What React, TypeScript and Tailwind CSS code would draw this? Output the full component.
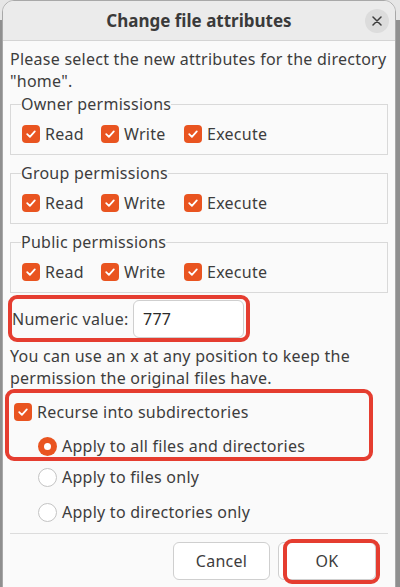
const font = "[font-family:'Noto_Sans',sans-serif]";

function Check({ size = 18 }: { size?: number }) {
  return (
    <span
      className="flex shrink-0 items-center justify-center rounded-[4px] bg-[#e95420]"
      style={{ width: size, height: size }}
    >
      <svg width="12" height="12" viewBox="0 0 12 12" fill="none">
        <path d="M2.2 6.2 L4.9 8.8 L9.8 3.4" stroke="white" strokeWidth="1.8" strokeLinecap="round" strokeLinejoin="round" />
      </svg>
    </span>
  );
}

function Radio({ on }: { on?: boolean }) {
  return on ? (
    <span className="flex h-[19px] w-[19px] shrink-0 items-center justify-center rounded-full bg-[#e95420]">
      <span className="h-[7px] w-[7px] rounded-full bg-white" />
    </span>
  ) : (
    <span className="h-[19px] w-[19px] shrink-0 rounded-full border border-[#c4c4c4] bg-white" />
  );
}

function PermGroup({ title }: { title: string }) {
  return (
    <fieldset className="border border-[#d9d9d9] pl-[11px] pb-[9px] pt-[8px]">
      <legend className="-ml-px h-[22px] leading-[22px]">{title}</legend>
      <div className="flex h-[22px] items-center">
        {["Read", "Write", "Execute"].map((t, i) => (
          <div key={t} className={`flex items-center gap-[5px] ${i === 0 ? "w-[79px]" : i === 1 ? "w-[83px]" : ""}`}>
            <Check />
            <span>{t}</span>
          </div>
        ))}
      </div>
    </fieldset>
  );
}

export default function App() {
  return (
    <div className={`relative h-[587px] w-[400px] overflow-hidden bg-[#8f8f8f] ${font} text-[16px] tracking-[0.25px] text-[#3d3d3d]`}>
      <div className="absolute left-0 top-0 h-[20px] w-[400px] bg-[#e6e6e6]" />
      <div className="relative ml-[2px] flex h-[600px] w-[394px] flex-col overflow-hidden rounded-t-[12px] border border-[#a8a8a8] bg-[#fafafa]">
        {/* title bar */}
        <div className="relative flex h-[40px] shrink-0 items-center justify-center border-b border-[#d4d4d4] bg-[#ebebeb]">
          <span className="text-[17px] font-bold tracking-normal text-[#3a3a3a]">Change file attributes</span>
          <span className="absolute right-[6px] top-[8px] flex h-[24px] w-[24px] items-center justify-center rounded-full bg-[#dcdcdc]">
            <svg width="10" height="10" viewBox="0 0 10 10">
              <path d="M1 1 L9 9 M9 1 L1 9" stroke="#3d3d3d" strokeWidth="1.5" strokeLinecap="round" />
            </svg>
          </span>
        </div>

        <div className="flex flex-col px-[7px] pt-[7px] leading-[22px]">
          <p className="whitespace-nowrap">
            Please select the new attributes for the directory
            <br />
            "home".
          </p>

          <div className="mt-px flex flex-col gap-[7px]">
            <PermGroup title="Owner permissions" />
            <PermGroup title="Group permissions" />
            <PermGroup title="Public permissions" />
          </div>

          {/* numeric value */}
          <div className="-ml-[2px] mt-[2px] flex h-[47px] w-[242px] items-center rounded-[9px] border-4 border-[#e53d30]">
            <span className="w-[121px]">Numeric value:</span>
            <div className="flex h-[38px] w-[111px] items-center rounded-[6px] border border-[#cfcfcf] bg-white pl-[9px] text-[#2b2b2b]">
              777
            </div>
          </div>

          <p className="mt-[3px] whitespace-nowrap">
            You can use an x at any position to keep the
            <br />
            permission the original files have.
          </p>

          <div className="-ml-[5px] flex h-[72px] w-[368px] flex-col rounded-[9px] border-4 border-[#e53d30] pl-[5px] pt-[10px]">
            <div className="flex h-[18px] items-center gap-[5px]">
              <Check />
              <span>Recurse into subdirectories</span>
            </div>
            <div className="ml-[24px] mt-[14px] flex items-center gap-[5px]">
              <Radio on />
              <span>Apply to all files and directories</span>
            </div>
          </div>

          <div className="ml-[28px] mt-[5px] flex h-[22px] items-center gap-[5px]">
            <Radio />
            <span>Apply to files only</span>
          </div>
          <div className="ml-[28px] mt-[13px] flex h-[22px] items-center gap-[5px]">
            <Radio />
            <span>Apply to directories only</span>
          </div>

          <div className="mt-[10px] h-px bg-[#dcdcdc]" />

          <div className="mt-[8px] flex justify-end gap-[8px] pr-[12px]">
            <button className="h-[38px] w-[97px] rounded-[6px] border border-[#cfcfcf] bg-white text-[#3d3d3d]">Cancel</button>
            <div className="relative">
              <button className="h-[38px] w-[98px] rounded-[6px] border border-[#cfcfcf] bg-white text-[#3d3d3d]">OK</button>
              <span className="pointer-events-none absolute -top-[3px] left-[5px] h-[45px] w-[97px] rounded-[9px] border-4 border-[#e53d30]" />
            </div>
          </div>
        </div>
      </div>
    </div>
  );
}
